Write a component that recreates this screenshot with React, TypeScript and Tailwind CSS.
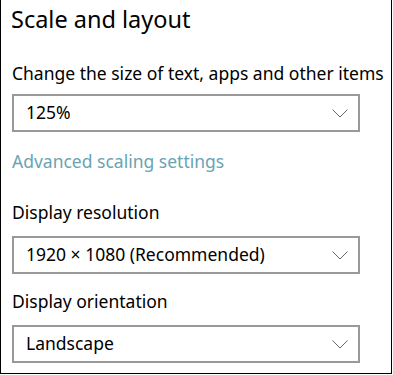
const font = { fontFamily: '"Noto Sans", "Open Sans", sans-serif' }

function Select({ value }: { value: string }) {
  return (
    <div className="flex items-center justify-between w-[348px] h-[38px] border-2 border-[#999999] bg-white pl-[12px] pr-[10px]">
      <span className="text-[17.5px] text-black leading-none">{value}</span>
      <svg width="16" height="9" viewBox="0 0 16 9" className="text-[#555]">
        <path d="M0.5 0.5 L8 8 L15.5 0.5" fill="none" stroke="currentColor" strokeWidth="0.9" />
      </svg>
    </div>
  )
}

export default function App() {
  return (
    <div className="w-[393px] h-[375px] bg-white" style={font}>
      <div className="w-[392px] h-[374px] border-l border-r border-b border-black pl-[11px] pt-[3px]">
        <h1 className="-ml-px text-[23.5px] leading-[32px] text-black font-normal">Scale and layout</h1>

        <p className="mt-[26px] text-[17.5px] leading-[24px] text-black">
          Change the size of text, apps and other items
        </p>
        <div className="mt-[9px]">
          <Select value="125%" />
        </div>

        <p className="mt-[17px] text-[17.5px] leading-[24px] text-[#6aa3b3]">Advanced scaling settings</p>

        <p className="mt-[27px] text-[17.5px] leading-[24px] text-black">Display resolution</p>
        <div className="mt-[12px]">
          <Select value="1920 × 1080 (Recommended)" />
        </div>

        <p className="mt-[15px] text-[17.5px] leading-[24px] text-black">Display orientation</p>
        <div className="mt-[12px]">
          <Select value="Landscape" />
        </div>
      </div>
    </div>
  )
}
